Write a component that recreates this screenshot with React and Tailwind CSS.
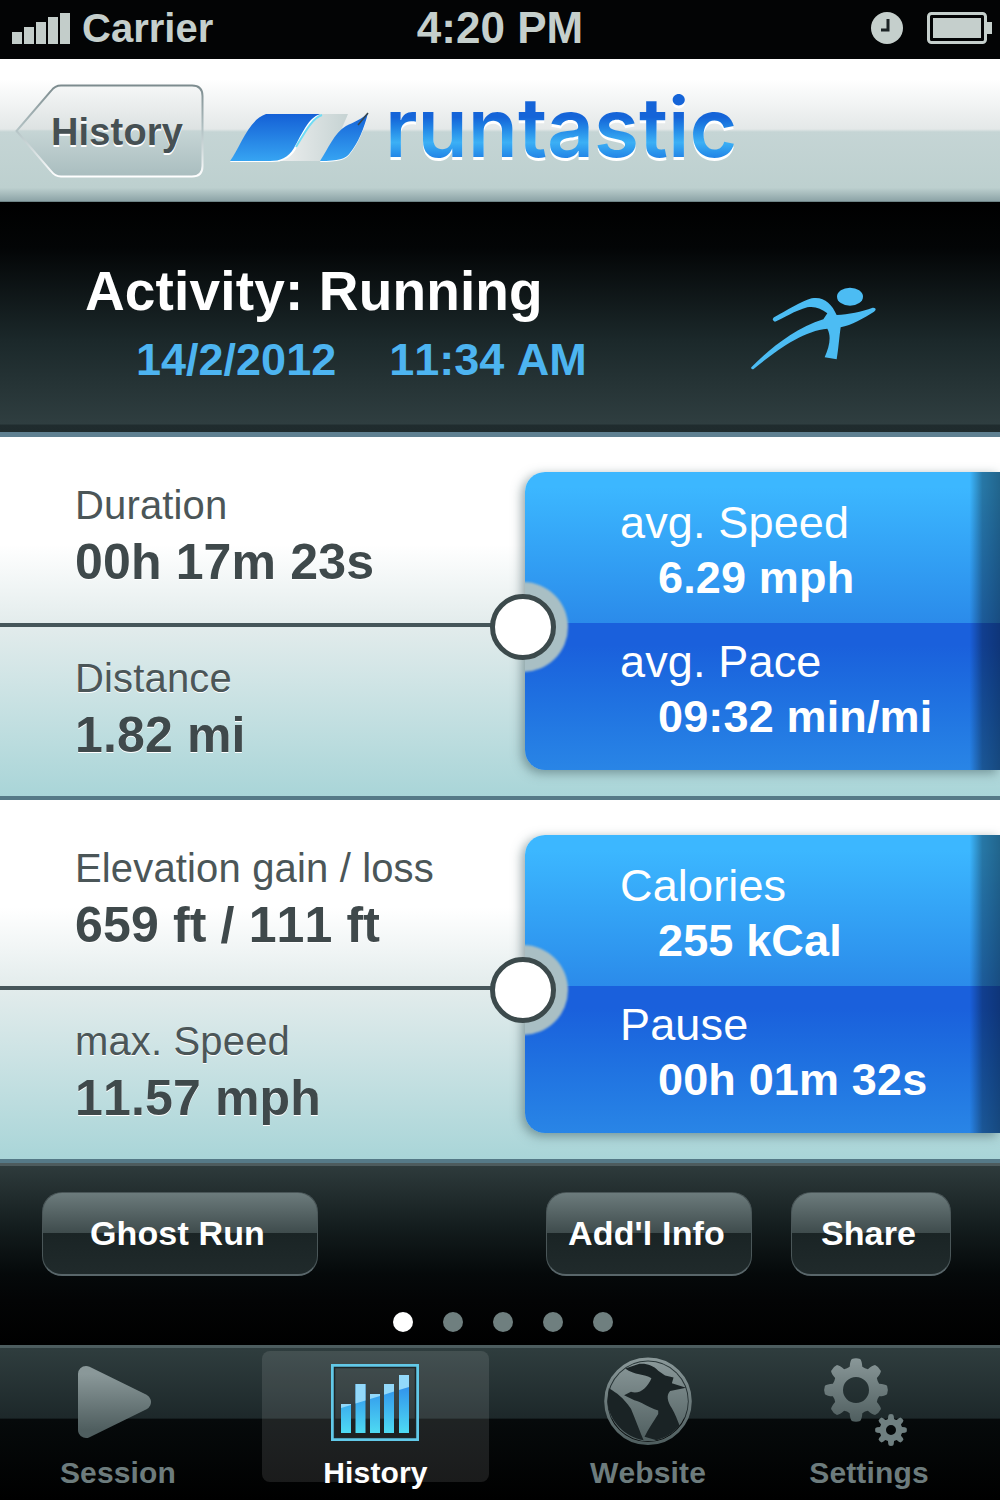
import React from "react";

// builds a closed cog outline plus its centre hole, used by the Settings tab
function gearPath(cx, cy, outer, root, hole, teeth) {
  const pts = [];
  const step = (Math.PI * 2) / teeth;
  for (let i = 0; i < teeth; i++) {
    const a = i * step - Math.PI / 2;
    const at = (r, da) => `${(cx + r * Math.cos(a + da)).toFixed(2)} ${(cy + r * Math.sin(a + da)).toFixed(2)}`;
    pts.push(`${i === 0 ? "M" : "L"}${at(root, -step * 0.34)}`);
    pts.push(`Q${at(outer * 0.92, -step * 0.26)} ${at(outer * 0.98, -step * 0.17)}`);
    pts.push(`Q${at(outer * 1.02, 0)} ${at(outer * 0.98, step * 0.17)}`);
    pts.push(`Q${at(outer * 0.92, step * 0.26)} ${at(root, step * 0.34)}`);
    pts.push(`Q${at(root * 0.96, step * 0.5)} ${at(root, step * 0.66)}`);
  }
  pts.push("Z");
  pts.push(`M${cx + hole} ${cy}A${hole} ${hole} 0 1 0 ${cx - hole} ${cy}A${hole} ${hole} 0 1 0 ${cx + hole} ${cy}Z`);
  return pts.join(" ");
}

function SignalBars() {
  const heights = ["h-[12px]", "h-[17px]", "h-[22px]", "h-[27px]", "h-[31px]"];
  return (
    <div className="flex items-end gap-[2px]">
      {heights.map((h) => (
        <div key={h} className={`w-[10px] bg-[#c3cdca] ${h}`} />
      ))}
    </div>
  );
}

function StatusBar() {
  return (
    <div className="grid h-[59px] grid-cols-3 items-center bg-[#030405] font-bold text-[#c5cfcc]">
      <div className="flex items-center pb-[3px] pl-[12px]">
        <SignalBars />
        <span className="ml-[12px] text-[40px] leading-[44px] tracking-normal">Carrier</span>
      </div>
      <div className="pb-[3px] text-center text-[44px] leading-[48px] tracking-normal">4:20 PM</div>
      <div className="flex items-center justify-end pr-[7px] pb-[3px]">
        <svg width="32" height="32" viewBox="0 0 32 32">
          <circle cx="16" cy="16" r="16" fill="#c5cfcc" />
          <path d="M17 7v11h-7" fill="none" stroke="#1c2325" strokeWidth="3" />
        </svg>
        <svg className="ml-[24px]" width="66" height="32" viewBox="0 0 66 32">
          <rect x="1.5" y="1.5" width="57" height="29" rx="3" fill="none" stroke="#c5cfcc" strokeWidth="3" />
          <rect x="6" y="6" width="48" height="20" fill="#c5cfcc" />
          <rect x="60" y="10" width="5" height="12" fill="#c5cfcc" />
        </svg>
      </div>
    </div>
  );
}

function BackButton() {
  return (
    <div className="relative flex h-[94px] w-[189px] items-center justify-center pt-[3px] pl-[15px]">
      <svg className="absolute inset-0" width="189" height="94" viewBox="0 0 189 94">
        <defs>
          <linearGradient id="backFill" x1="0" y1="0" x2="0" y2="1">
            <stop offset="0" stopColor="#f5f7f7" />
            <stop offset="0.48" stopColor="#dde2e2" />
            <stop offset="0.5" stopColor="#c6d5d5" />
            <stop offset="1" stopColor="#a9bdbf" />
          </linearGradient>
          <linearGradient id="backStroke" x1="0" y1="0" x2="0" y2="1">
            <stop offset="0" stopColor="#7c8b8e" />
            <stop offset="0.5" stopColor="#b5c4c6" />
            <stop offset="1" stopColor="#ffffff" />
          </linearGradient>
        </defs>
        <path
          d="M46 1.5H177Q187.5 1.5 187.5 12V82Q187.5 92.5 177 92.5H46Q40 92.5 36 87L1.5 47L36 7Q40 1.5 46 1.5Z"
          fill="url(#backFill)"
          stroke="url(#backStroke)"
          strokeWidth="2"
        />
      </svg>
      <span className="relative text-[38px] font-bold text-[#465053] [text-shadow:0_2px_0_#ffffff]">History</span>
    </div>
  );
}

function Logo() {
  return (
    <div className="mb-[6px] ml-[26px] flex items-end">
      <svg width="140" height="52" viewBox="0 0 140 52">
        <defs>
          <linearGradient id="swoosh" x1="0" y1="0" x2="0" y2="1">
            <stop offset="0" stopColor="#1460d6" />
            <stop offset="1" stopColor="#36a4f2" />
          </linearGradient>
          <linearGradient id="ribbon" x1="0" y1="0" x2="1" y2="0">
            <stop offset="0" stopColor="#eceeee" />
            <stop offset="1" stopColor="#c6d3d3" />
          </linearGradient>
        </defs>
        <path d="M70 2H118C112 16 104 34 96 49H50Z" fill="url(#ribbon)" />
        <path d="M0 50C10 37 18 9 36 3H92C80 7 74 23 66 37C60 47 52 50 42 50Z" fill="#ffffff" />
        <path d="M92 3C82 6 74 22 66 35" fill="none" stroke="#6fdcf5" strokeWidth="2" />
        <path d="M0 49C10 36 18 8 36 2H90C78 6 72 22 64 36C58 46 50 49 40 49Z" fill="url(#swoosh)" />
        <path d="M90 50C98 38 104 22 116 15C124 10 132 7 138 2C134 18 128 32 120 42C116 48 108 50 90 50Z" fill="#ffffff" />
        <path d="M90 49C98 37 104 21 116 14C124 10 132 7 138 1C134 17 128 31 120 41C116 47 108 49 90 49Z" fill="url(#swoosh)" />
        <path d="M138 1L128 13" stroke="#39464a" strokeWidth="1.5" />
      </svg>
      <span className="ml-[15px] bg-linear-to-b from-[#1564d8] from-35% via-[#3cb0f5] via-70% to-[#1b72e0] bg-clip-text font-['Inter',sans-serif] text-[82px] leading-[72px] font-semibold tracking-normal text-transparent drop-shadow-[0_3px_0_#ffffff]">
        runtastic
      </span>
    </div>
  );
}

function Header() {
  return (
    <div className="flex h-[143px] items-center bg-[linear-gradient(to_bottom,#ffffff_0%,#ffffff_14%,#e4e8e8_49%,#c5d5d5_51%,#bdd0cf_90%,#8ea5a8_99%,#5e7375_100%)] pl-[15px]">
      <BackButton />
      <Logo />
    </div>
  );
}

function RunnerIcon() {
  return (
    <svg className="mt-[68px] mr-[100px] ml-auto" width="180" height="120" viewBox="0 0 540 360">
      <ellipse cx="390" cy="80" rx="39" ry="27" fill="#4cbcf3" />
      <path
        d="M94 292C150 235 225 175 310 148L322 130C304 116 285 108 262 112C225 122 190 145 165 155C156 152 156 144 165 140C200 122 240 95 275 85C310 78 335 100 350 135C385 133 425 125 458 113C468 112 470 120 462 125C430 145 395 165 362 172C358 200 355 240 350 268L314 262C328 230 335 200 322 176C250 182 170 240 100 298C96 298 92 296 94 292Z"
        fill="#4cbcf3"
      />
    </svg>
  );
}

function ActivityBand() {
  return (
    <div className="flex h-[235px] border-b-[5px] border-[#5f8091] bg-[linear-gradient(to_bottom,#000000_0%,#030506_20%,#1b282a_60%,#2f3e40_96.5%,#202c2e_97%,#1f2b2d_100%)]">
      <div className="pt-[59px] pl-[85px] font-bold">
        <div className="text-[55px] leading-[60px] text-white">Activity: Running</div>
        <div className="mt-[14px] flex pl-[51px] text-[45px] leading-[50px] tracking-normal text-[#4db4f0]">
          <span>14/2/2012</span>
          <span className="ml-[53px]">11:34 AM</span>
        </div>
      </div>
      <RunnerIcon />
    </div>
  );
}

function LeftStat({ label, value }) {
  return (
    <div className="pl-[75px] [text-shadow:0_1px_0_#ffffff]">
      <div className="text-[40px] leading-[57px] text-[#4b5658]">{label}</div>
      <div className="text-[50px] leading-[57px] font-bold text-[#3f494b]">{value}</div>
    </div>
  );
}

function BlueRow({ label, value, className, pad }) {
  return (
    <div className={`relative flex ${className}`}>
      <div className={`flex-1 pl-[95px] text-white ${pad}`}>
        <div className="text-[45px] leading-[55px]">{label}</div>
        <div className="pl-[38px] text-[45px] leading-[55px] font-bold">{value}</div>
      </div>
      <div className="w-[32px] bg-linear-to-r from-black/0 from-5% via-black/35 via-45% to-black/45" />
    </div>
  );
}

function StatSection({ left, right }) {
  return (
    <div className="relative flex h-[363px] border-b-[4px] border-[#557987] bg-[linear-gradient(to_bottom,#ffffff_0%,#ffffff_30%,#e3ecec_52%,#a9d5d8_100%)]">
      <div className="w-[525px] shrink-0">
        <div className="h-[190px] border-b-[4px] border-[#46565a] pt-[40px]">
          <LeftStat {...left[0]} />
        </div>
        <div className="pt-[23px]">
          <LeftStat {...left[1]} />
        </div>
      </div>
      <div className="mt-[35px] h-[298px] flex-1 rounded-l-[20px] shadow-[-3px_3px_11px_rgba(60,90,95,0.55)]">
        <div className="relative flex h-full flex-col overflow-hidden rounded-l-[20px]">
          <BlueRow
            {...right[0]}
            pad="pt-[23px]"
            className="h-[151px] bg-linear-to-b from-[#3cb7ff] from-10% to-[#2b8bea]"
          />
          <BlueRow
            {...right[1]}
            pad="pt-[11px]"
            className="h-[147px] bg-linear-to-b from-[#1a60dc] from-15% to-[#2985e6]"
          />
          <div className="absolute top-[110px] left-[-47px] h-[90px] w-[90px] rounded-full bg-[#a9bfc4] blur-[1px]" />
        </div>
      </div>
      {/* connector knob sitting on the divider line */}
      <div className="absolute top-[157px] left-[490px] h-[66px] w-[66px] rounded-full border-[5px] border-[#3c4a4c] bg-white" />
    </div>
  );
}

function ToolbarButton({ children, className }) {
  return (
    <button
      className={`h-[84px] rounded-[20px] border border-b-2 border-[#4a5658] border-b-[#59666a] bg-[linear-gradient(to_bottom,#6c7b7c_0%,#3f4c4d_49%,#1a2425_50%,#202a2b_100%)] pr-[5px] text-[34px] font-bold text-white ${className}`}
    >
      {children}
    </button>
  );
}

function Toolbar() {
  return (
    <div className="h-[182px] border-t-[3px] border-[#4d5b5d] bg-[linear-gradient(to_bottom,#2e3b3c_0%,#131c1d_35%,#05090a_60%,#030405_75%,#000000_100%)]">
      <div className="flex px-[49px] pt-[26px] pl-[42px]">
        <ToolbarButton className="w-[276px]">Ghost Run</ToolbarButton>
        <ToolbarButton className="ml-auto w-[206px]">Add'l Info</ToolbarButton>
        <ToolbarButton className="ml-[39px] w-[160px]">Share</ToolbarButton>
      </div>
      <div className="mt-[36px] flex justify-center gap-[30px] pl-[6px]">
        <div className="h-[20px] w-[20px] rounded-full bg-white" />
        <div className="h-[20px] w-[20px] rounded-full bg-[#6f7f7f]" />
        <div className="h-[20px] w-[20px] rounded-full bg-[#6f7f7f]" />
        <div className="h-[20px] w-[20px] rounded-full bg-[#6f7f7f]" />
        <div className="h-[20px] w-[20px] rounded-full bg-[#6f7f7f]" />
      </div>
    </div>
  );
}

function GrayGradient({ id }) {
  return (
    <defs>
      <linearGradient id={id} x1="0" y1="0" x2="0" y2="1">
        <stop offset="0" stopColor="#8a9899" />
        <stop offset="1" stopColor="#4f5e5f" />
      </linearGradient>
    </defs>
  );
}

function PlayIcon() {
  return (
    <svg className="mr-[6px]" width="76" height="74" viewBox="0 0 76 74">
      <GrayGradient id="playGray" />
      <path
        d="M9 9L66 37L9 65Z"
        fill="url(#playGray)"
        stroke="url(#playGray)"
        strokeWidth="16"
        strokeLinejoin="round"
      />
    </svg>
  );
}

function ChartIcon() {
  const bars = [
    { x: 10, y: 40 },
    { x: 24.5, y: 20 },
    { x: 39, y: 30 },
    { x: 53, y: 20 },
    { x: 68, y: 11 },
  ];
  return (
    <svg className="mr-[2px]" width="88" height="77" viewBox="0 0 88 77">
      <defs>
        <linearGradient id="barFill" gradientUnits="userSpaceOnUse" x1="0" y1="20" x2="0" y2="69">
          <stop offset="0" stopColor="#2f8fec" />
          <stop offset="1" stopColor="#4edaf2" />
        </linearGradient>
      </defs>
      <rect x="1.5" y="1.5" width="85" height="74" fill="none" stroke="#62c9e8" strokeWidth="3" />
      <rect x="3.5" y="3.5" width="81" height="70" fill="none" stroke="#1d2628" strokeWidth="1.5" />
      {bars.map((b) => {
        // glossy upper part of each bar, its lower edge rises to the right
        const split = 44 - (b.x - 10) * 0.31;
        return (
          <g key={b.x}>
            <rect x={b.x} y={b.y} width="10" height={69 - b.y} fill="url(#barFill)" />
            <path
              d={`M${b.x} ${b.y}h10V${split - 3.1}L${b.x} ${split}Z`}
              fill="#93d9fa"
            />
          </g>
        );
      })}
    </svg>
  );
}

function GlobeIcon() {
  return (
    <svg width="92" height="90" viewBox="40 38 270 264">
      <GrayGradient id="globeGray" />
      <circle cx="175" cy="168" r="124" fill="none" stroke="url(#globeGray)" strokeWidth="9" />
      <circle cx="175" cy="168" r="117" fill="url(#globeGray)" />
      <path
        d="M108 72L150 58C170 56 190 62 205 78L225 92L250 98L245 115L287 128L240 138C228 150 232 170 245 188C255 205 262 225 268 240C245 265 225 275 200 282L165 272C175 250 190 230 205 205L205 195C175 185 155 170 135 165L105 150L125 140C150 150 175 125 185 100C165 88 135 92 108 72Z"
        fill="#1a2325"
      />
      <path d="M60 130C85 145 100 155 125 190C140 225 150 255 162 282C110 275 60 225 56 170Z" fill="#1a2325" />
    </svg>
  );
}

function GearsIcon() {
  return (
    <svg width="92" height="90" viewBox="0 0 92 90">
      <GrayGradient id="gearGray" />
      <path d={gearPath(33, 33, 32, 24, 13, 8)} fill="url(#gearGray)" fillRule="evenodd" />
      <path d={gearPath(68, 73, 16, 11.5, 5, 8)} fill="#6f7f80" fillRule="evenodd" />
    </svg>
  );
}

function Tab({ label, icon, active, className }) {
  return (
    <div
      className={`flex h-[131px] flex-col items-center rounded-[8px] ${active ? "bg-white/10" : ""} ${className}`}
    >
      <div className="flex h-[102px] shrink-0 items-center justify-center">{icon}</div>
      <div className={`text-[30px] leading-[40px] font-bold whitespace-nowrap ${active ? "text-white" : "text-[#6d7c7d]"}`}>
        {label}
      </div>
    </div>
  );
}

function TabBar() {
  return (
    <div className="h-[155px] border-t-[3px] border-[#4d5d5f] bg-[linear-gradient(to_bottom,#2f3d3e_0%,#1d282a_46%,#060a0b_47%,#000000_100%)] pt-[3px]">
      <div className="flex">
        <Tab className="w-[236px]" label="Session" icon={<PlayIcon />} />
        <Tab className="ml-[26px] w-[227px]" label="History" icon={<ChartIcon />} active />
        <Tab className="w-[318px]" label="Website" icon={<GlobeIcon />} />
        <Tab className="w-[124px]" label="Settings" icon={<GearsIcon />} />
      </div>
    </div>
  );
}

export default function App() {
  return (
    <div className="h-[1500px] w-[1000px] overflow-hidden bg-black font-['Liberation_Sans',Arial,sans-serif] tracking-[0.15px] [font-kerning:none]">
      <StatusBar />
      <Header />
      <ActivityBand />
      <StatSection
        left={[
          { label: "Duration", value: "00h 17m 23s" },
          { label: "Distance", value: "1.82 mi" },
        ]}
        right={[
          { label: "avg. Speed", value: "6.29 mph" },
          { label: "avg. Pace", value: "09:32 min/mi" },
        ]}
      />
      <StatSection
        left={[
          { label: "Elevation gain / loss", value: "659 ft / 111 ft" },
          { label: "max. Speed", value: "11.57 mph" },
        ]}
        right={[
          { label: "Calories", value: "255 kCal" },
          { label: "Pause", value: "00h 01m 32s" },
        ]}
      />
      <Toolbar />
      <TabBar />
    </div>
  );
}
